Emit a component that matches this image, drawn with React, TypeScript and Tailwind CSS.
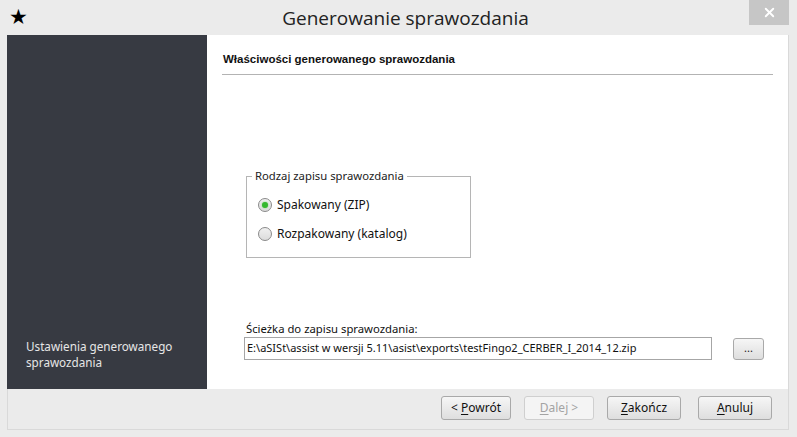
import { X } from "lucide-react"

const ui = "font-['Noto_Sans','Open_Sans',sans-serif]"

const Btn = ({ u, rest, pre = "", disabled = false, w }: { u: string; rest: string; pre?: string; disabled?: boolean; w: string }) => (
    <div
        className={`${w} h-[24px] flex items-center justify-center rounded-[3px] border text-[12px] ${
            disabled
                ? "border-[#cfcfcf] bg-[#f4f4f4] text-[#a3a3a3]"
                : "border-[#a9a9a9] bg-gradient-to-b from-[#f6f6f6] to-[#dedede] text-[#111]"
        }`}
    >
        <span>
            {pre}
            <span className="underline underline-offset-2">{u}</span>
            {rest}
        </span>
    </div>
)

const Radio = ({ checked, label }: { checked?: boolean; label: string }) => (
    <div className="flex items-center gap-[5px]">
        <div className="w-[14px] h-[14px] rounded-full border border-[#8a8a8a] bg-gradient-to-b from-[#f0f0f0] to-[#dcdcdc] flex items-center justify-center">
            {checked && <div className="w-[6px] h-[6px] rounded-full bg-[#35b82e] shadow-[0_0_2px_#7ad46f]" />}
        </div>
        <span className="text-[12px] text-[#111]">{label}</span>
    </div>
)

const App = () => {
    return (
        <div className={`w-[797px] h-[437px] bg-[#ebebeb] flex flex-col ${ui}`}>
            <div className="h-[35px] flex items-start">
                <span className="ml-[9px] mt-[4px] text-[21px] leading-[24px] text-black">★</span>
                <div className="flex-1 text-center text-[19px] leading-[28px] mt-[4px] pl-[34px] text-[#222] font-['Open_Sans','Noto_Sans',sans-serif]">
                    Generowanie sprawozdania
                </div>
                <div className="mr-[8px] w-[40px] h-[25px] bg-[#c6c6c6] flex items-center justify-center">
                    <X size={15} strokeWidth={3} className="text-white" />
                </div>
            </div>

            <div className="mx-[7px] mr-[8px] flex-1 flex flex-col border-x border-b border-[#d9d9d9] mb-[7px]">
                <div className="h-[354px] flex">
                    <div className="w-[200px] bg-[#373a42] flex flex-col justify-end pb-[19px] pl-[19px] -ml-px">
                        <div className="text-[11.7px] leading-[16px] text-[#e6e6e6]">
                            Ustawienia generowanego
                            <br />
                            sprawozdania
                        </div>
                    </div>
                    <div className="flex-1 bg-white flex flex-col pl-[15px] pr-[15px]">
                        <div className="pt-[16px] text-[11.5px] leading-[16px] font-bold text-[#111] font-['Liberation_Sans',Arial,sans-serif] pl-px">
                            Właściwości generowanego sprawozdania
                        </div>
                        <div className="mt-[7px] h-px bg-[#b3b3b3]" />

                        <div className="mt-[101px] ml-[24px] w-[225px] h-[82px] border border-[#b5b5b5] relative">
                            <span className="absolute -top-[9px] left-[5px] px-[3px] bg-white text-[11.3px] leading-[16px] text-[#222]">
                                Rodzaj zapisu sprawozdania
                            </span>
                            <div className="pt-[19px] pl-[11px] flex flex-col gap-[11px]">
                                <Radio checked label="Spakowany (ZIP)" />
                                <Radio label="Rozpakowany (katalog)" />
                            </div>
                        </div>

                        <div className="mt-[63px] ml-[24px] text-[11.3px] leading-[16px] text-[#111]">Ścieżka do zapisu sprawozdania:</div>
                        <div className="ml-[22px] flex items-center gap-[21px]">
                            <div className="w-[468px] h-[23px] border border-[#a6a6a6] flex items-center pl-[2px] text-[11px] text-[#111] whitespace-nowrap overflow-hidden">
                                E:\aSISt\assist w wersji 5.11\asist\exports\testFingo2_CERBER_I_2014_12.zip
                            </div>
                            <div className="w-[31px] h-[22px] rounded-[3px] border border-[#a9a9a9] bg-gradient-to-b from-[#f6f6f6] to-[#dedede] flex items-center justify-center text-[11px] text-[#222] leading-none pb-[3px]">
                                ...
                            </div>
                        </div>
                    </div>
                </div>
                <div className="flex-1 flex items-center justify-end pr-[16px] pb-[2px]">
                    <Btn w="w-[70px]" pre="< " u="P" rest="owrót" />
                    <div className="w-[13px]" />
                    <Btn w="w-[70px]" u="D" rest="alej >" disabled />
                    <div className="w-[13px]" />
                    <Btn w="w-[74px]" u="Z" rest="akończ" />
                    <div className="w-[17px]" />
                    <Btn w="w-[74px]" u="A" rest="nuluj" />
                </div>
            </div>
        </div>
    )
}

export default App
